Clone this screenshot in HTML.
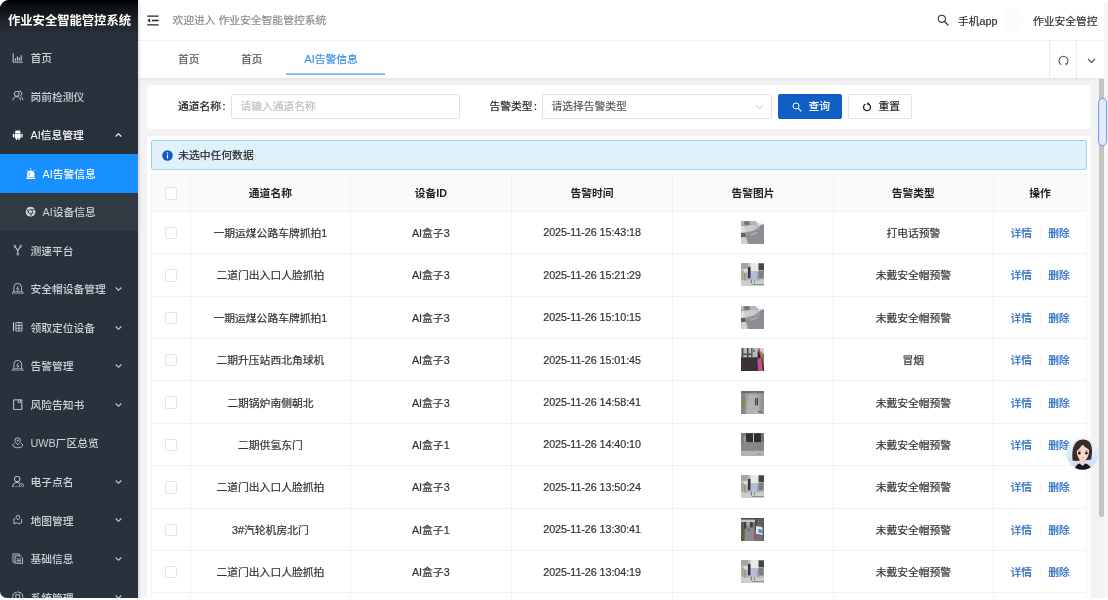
<!DOCTYPE html>
<html lang="zh-CN">
<head>
<meta charset="utf-8">
<title>作业安全智能管控系统</title>
<style>
*{box-sizing:border-box;margin:0;padding:0}
html,body{width:1108px;height:600px;overflow:hidden;background:#fff}
body{font-family:"Liberation Sans","Noto Sans CJK SC",sans-serif;font-size:10.77px;color:#333;position:relative;-webkit-text-stroke:0.2px}
.app{will-change:transform;position:absolute;left:0;top:0;width:1108px;height:598px;border-radius:9px 9px 7px 7px;overflow:hidden;background:#f3f3f4}
/* sidebar */
.side{position:absolute;left:0;top:0;width:138.3px;height:598px;background:#29323c;box-shadow:1px 0 3px rgba(0,21,41,.16)}
.logo{position:absolute;left:0;top:0;width:138.3px;height:38.5px;background:linear-gradient(#000 0%,#0a0c0f 12%,#1b2127 50%,#272f39 85%,#29323c 100%);color:#fff;font-weight:700;font-size:12.3px;line-height:42px;-webkit-text-stroke:0;padding-left:8px;white-space:nowrap;letter-spacing:0}
.mi{position:absolute;left:0;width:138.3px;height:38.5px;line-height:38.5px;font-weight:500;-webkit-text-stroke:0;color:#cdd1d5;white-space:nowrap}
.mi .t{position:absolute;left:30.5px;top:0.600px}
.mi svg.ic{position:absolute;left:12px;top:13.2px;width:11.5px;height:11.5px}
.mi svg.ar{position:absolute;left:115.3px;top:16.4px;width:7px;height:6px}
.mi.sub{background:#313943}
.mi.sub .t{left:42.5px}
.mi.sub svg.ic{left:24.6px}
.mi.act{background:#1890ff;color:#fff}
.mi.act svg.ic{top:13.7px}
.mi.open{color:#fff}
/* header */
.hd{position:absolute;left:138.3px;top:0;right:0;height:40.5px;background:#fff;border-bottom:1px solid #f0f0f0}
.hd .wel{position:absolute;left:34.2px;top:0;line-height:41px;color:#8c8c8c;white-space:nowrap}
.hd .r1{position:absolute;left:819.7px;top:0.6px;line-height:41px;color:#333;white-space:nowrap}
.hd .r2{position:absolute;left:894.7px;top:0.6px;line-height:41px;color:#333;white-space:nowrap}
/* tabs */
.tabs{position:absolute;left:138.3px;top:41px;right:0;height:37px;background:#fff;box-shadow:0 3px 4px -2px rgba(0,0,0,.085)}
.tabs .tb{position:absolute;top:0;line-height:36.5px;color:#555;white-space:nowrap}
.tabs .tb.on{color:#3a8ee6}
.tabs .ul{position:absolute;left:147.5px;top:32px;width:99px;height:2px;background:#8bbbf0}
.tabs .sep{position:absolute;top:0;width:1px;height:37px;background:#ebebeb}
/* content */
.card{position:absolute;background:#fff;border-radius:2px}
.lbl{position:absolute;line-height:24.6px;font-weight:400;color:#1a1a1a;white-space:nowrap}
.inp{position:absolute;height:24.6px;border:1px solid #e1e1e1;border-radius:2px;background:#fff;line-height:22.6px;padding-left:8.5px;white-space:nowrap}
.btn{position:absolute;height:24.6px;border-radius:2px;line-height:22.6px;white-space:nowrap;font-weight:500;-webkit-text-stroke:0}
.alert{position:absolute;left:151px;top:140px;width:936px;height:30px;background:#e1f1fb;border:1px solid #9fd0ec;border-radius:2px}
.alert .t{position:absolute;left:26.300px;top:0;line-height:28.600px;color:#262626;white-space:nowrap}
table{position:absolute;left:151px;top:174px;width:936px;border-collapse:separate;border-spacing:0;table-layout:fixed;border-top:1px solid #f2f2f2;border-left:1px solid #f2f2f2}
th,td{border-right:1px solid #f2f2f2;border-bottom:1px solid #f2f2f2;text-align:center;white-space:nowrap;padding:0;vertical-align:middle}
th{height:36.750px;background:#fafafa;font-weight:700;color:#1f1f1f;-webkit-text-stroke:0}
td{height:42.42px;color:#333;-webkit-text-stroke:0.2px}
.cb{display:inline-block;width:12.3px;height:12.3px;border:1px solid #e4e4e4;border-radius:2px;background:#fff;vertical-align:middle}
a{color:#1c63c2;text-decoration:none}
.tm{letter-spacing:-0.08px}
.dv{display:inline-block;width:1px;height:9px;background:#f2f2f2;margin:0 7.6px 0 7.6px;vertical-align:-1px}
.th{display:inline-block;width:23px;height:23px;vertical-align:middle;overflow:hidden}
</style>
</head>
<body>
<div class="app">

<!-- MAIN BACKGROUND -->
<div class="hd">
  <svg style="position:absolute;left:8.600px;top:15.400px" width="12" height="11" viewBox="0 0 12 11"><path d="M0.300 1.200H11.600M4.800 5.500H11.600M0.300 9.800H11.600" stroke="#222" stroke-width="1.300" fill="none"/><path d="M3.2 3.3V7.7L0.3 5.5Z" fill="#222"/></svg>
  <div class="wel">欢迎进入 作业安全智能管控系统</div>
  <svg style="position:absolute;left:798.5px;top:14.2px" width="12" height="12" viewBox="0 0 12 12"><circle cx="4.800" cy="4.800" r="3.600" stroke="#333" stroke-width="1.100" fill="none"/><path d="M7.500 7.500L11 11" stroke="#333" stroke-width="1.250" stroke-linecap="round"/></svg>
  <div class="r1">手机app</div>
  <div style="position:absolute;left:864px;top:8px;width:21px;height:24px;border-radius:8px;background:#fcfcfc"></div>
  <div class="r2">作业安全管控</div>
</div>

<div class="tabs">
  <div class="tb" style="left:39.7px">首页</div>
  <div class="tb" style="left:102.7px">首页</div>
  <div class="tb on" style="left:166.3px">AI告警信息</div>
  <div class="ul"></div>
  <div class="sep" style="left:910.3px"></div>
  <div class="sep" style="left:938.2px"></div>
  <svg style="position:absolute;left:919.5px;top:13.5px" width="11" height="11" viewBox="0 0 11 11"><path d="M3.2 9.6A4.5 4.5 0 1 1 7.8 9.6" stroke="#555" stroke-width="1.1" fill="none"/><path d="M7.2 8.2L8.4 10.4L9.6 8.6" fill="#555"/></svg>
  <svg style="position:absolute;left:949px;top:16.5px" width="9" height="6" viewBox="0 0 9 6"><path d="M1 1L4.5 4.5L8 1" stroke="#555" stroke-width="1.1" fill="none"/></svg>
</div>

<!-- filter card -->
<div class="card" style="left:147.3px;top:84.6px;width:943.7px;height:44.4px"></div>
<div class="lbl" style="left:178px;top:94px">通道名称<span style="margin-left:1.500px">:</span></div>
<div class="inp" style="left:231px;top:94px;width:228.7px;color:#bfbfbf">请输入通道名称</div>
<div class="lbl" style="left:489.5px;top:94px">告警类型<span style="margin-left:1.500px">:</span></div>
<div class="inp" style="left:542px;top:94px;width:229.500px;color:#595959">请选择告警类型</div>
<svg style="position:absolute;left:754.5px;top:103.5px" width="9" height="6" viewBox="0 0 9 6"><path d="M0.8 0.8L4.5 4.8L8.2 0.8" stroke="#c4c4c4" stroke-width="1" fill="none"/></svg>
<div class="btn" style="left:778px;top:94px;width:63.7px;background:#0f5fc4;color:#fff;border:1px solid #0f5fc4">
  <svg style="position:absolute;left:12.5px;top:6.5px" width="10" height="10" viewBox="0 0 10 10"><circle cx="4" cy="4" r="3" stroke="#fff" stroke-width="1" fill="none"/><path d="M6.300 6.300L9.100 9.100" stroke="#fff" stroke-width="1.100" stroke-linecap="round"/></svg>
  <span style="position:absolute;left:29.5px;top:0">查询</span>
</div>
<div class="btn" style="left:848px;top:94px;width:63.8px;background:#fff;color:#262626;border:1px solid #e2e2e2">
  <svg style="position:absolute;left:12.5px;top:6.5px" width="10" height="10" viewBox="0 0 10 10"><path d="M3.400 2.100A3.500 3.500 0 1 0 6.200 1.900" stroke="#262626" stroke-width="1.300" fill="none"/><path d="M6.800 0.100L4.400 1.900L7 3.500Z" fill="#262626"/></svg>
  <span style="position:absolute;left:29.5px;top:0">重置</span>
</div>

<!-- table card -->
<div class="card" style="left:147.3px;top:135.5px;width:943.7px;height:480px"></div>
<div class="alert">
  <svg style="position:absolute;left:9.700px;top:8.800px" width="11" height="11" viewBox="0 0 11 11"><circle cx="5.5" cy="5.5" r="5.3" fill="#0f5cbd"/><rect x="4.9" y="4.6" width="1.2" height="3.8" fill="#fff"/><circle cx="5.5" cy="3" r="0.8" fill="#fff"/></svg>
  <div class="t">未选中任何数据</div>
</div>

<table>
<colgroup><col style="width:39px"><col style="width:159.8px"><col style="width:161px"><col style="width:161.5px"><col style="width:160.3px"><col style="width:160.5px"><col></colgroup>
<tr><th><span class="cb"></span></th><th>通道名称</th><th>设备ID</th><th>告警时间</th><th>告警图片</th><th>告警类型</th><th>操作</th></tr>
<tr><td><span class="cb"></span></td><td>一期运煤公路车牌抓拍1</td><td>AI盒子3</td><td class="tm">2025-11-26 15:43:18</td><td><svg class="th" viewBox="0 0 23 23" width="23" height="23"><filter id="b0" x="-10%" y="-10%" width="120%" height="120%"><feGaussianBlur stdDeviation="0.5"/></filter><g filter="url(#b0)"><rect x="-2" y="-2" width="27" height="27" fill="#9c9da0"/><path d="M-2 -2H25V4L17 5.500L12 3L4 4.500L-2 3Z" fill="#b4b7ba"/><path d="M2.500 0.500L8 0L9 3.500L4 4.500Z" fill="#70757a"/><path d="M13.500 -2H25V2.800L19.500 3.400L16 2Z" fill="#f6f7f8"/><path d="M16.500 2.500L20.500 2.800L20 5.500L17 5Z" fill="#d9dcdf"/><path d="M2 5.500L12 3.500L17.500 5.500L13 9.500L4 11.500Z" fill="#c8ccd1"/><path d="M-2 5L3 5L4.500 11.500L-2 12.500Z" fill="#dcdee0"/><path d="M-2 12L4 11.800L5.200 16L-2 17Z" fill="#625f5d"/><path d="M-2 16.800L4.500 15.800L7.500 25H-2Z" fill="#d6cfc7"/><path d="M5.500 14L13 9.500L25 8V25H8.500Z" fill="#8d8e93"/><path d="M19 4.500L25 3.500V9L18.500 8Z" fill="#84898b"/><path d="M9 13L16 10.500L17 12.200L10 15Z" fill="#a9a7af"/></g></svg></td><td>打电话预警</td><td><a>详情</a><span class="dv"></span><a>删除</a></td></tr>
<tr><td><span class="cb"></span></td><td>二道门出入口人脸抓拍</td><td>AI盒子3</td><td class="tm">2025-11-26 15:21:29</td><td><svg class="th" viewBox="0 0 23 23" width="23" height="23"><filter id="b1" x="-10%" y="-10%" width="120%" height="120%"><feGaussianBlur stdDeviation="0.5"/></filter><g filter="url(#b1)"><rect x="-2" y="-2" width="27" height="27" fill="#bcbfc3"/><rect x="-2" y="-2" width="9" height="7.500" fill="#a5a59d"/><rect x="9.500" y="-2" width="8" height="10" fill="#e6e8ea"/><rect x="17.600" y="0.400" width="7" height="6.800" fill="#3d474d"/><rect x="17.600" y="8" width="5" height="7.500" fill="#7b7f81"/><rect x="0.400" y="8" width="2.200" height="8.500" fill="#b3a268"/><rect x="3" y="6.500" width="3.500" height="2" fill="#e3e6ea"/><rect x="7" y="3.800" width="2.500" height="11.800" rx="1" fill="#3a3051"/><rect x="11" y="10" width="5.200" height="7.200" fill="#b3bfd6"/><rect x="3.200" y="10" width="1.400" height="8" fill="#8a8e92"/><rect x="5.600" y="10.500" width="1" height="7.500" fill="#9a9ea2"/><rect x="16.600" y="9" width="1" height="9" fill="#8a8e92"/><rect x="-2" y="17.500" width="27" height="8" fill="#cdcdc9"/><rect x="9.800" y="16.500" width="1" height="4" fill="#7a6a6e"/><rect x="13" y="17" width="1" height="3.500" fill="#8a8e92"/><rect x="11" y="21" width="14" height="0.900" fill="#8a8e92"/></g></svg></td><td>未戴安全帽预警</td><td><a>详情</a><span class="dv"></span><a>删除</a></td></tr>
<tr><td><span class="cb"></span></td><td>一期运煤公路车牌抓拍1</td><td>AI盒子3</td><td class="tm">2025-11-26 15:10:15</td><td><svg class="th" viewBox="0 0 23 23" width="23" height="23"><filter id="b2" x="-10%" y="-10%" width="120%" height="120%"><feGaussianBlur stdDeviation="0.5"/></filter><g filter="url(#b2)"><rect x="-2" y="-2" width="27" height="27" fill="#9c9da0"/><path d="M-2 -2H25V4L17 5.500L12 3L4 4.500L-2 3Z" fill="#b4b7ba"/><path d="M2.500 0.500L8 0L9 3.500L4 4.500Z" fill="#70757a"/><path d="M13.500 -2H25V2.800L19.500 3.400L16 2Z" fill="#f6f7f8"/><path d="M16.500 2.500L20.500 2.800L20 5.500L17 5Z" fill="#d9dcdf"/><path d="M2 5.500L12 3.500L17.500 5.500L13 9.500L4 11.500Z" fill="#c8ccd1"/><path d="M-2 5L3 5L4.500 11.500L-2 12.500Z" fill="#dcdee0"/><path d="M-2 12L4 11.800L5.200 16L-2 17Z" fill="#625f5d"/><path d="M-2 16.800L4.500 15.800L7.500 25H-2Z" fill="#d6cfc7"/><path d="M5.500 14L13 9.500L25 8V25H8.500Z" fill="#8d8e93"/><path d="M19 4.500L25 3.500V9L18.500 8Z" fill="#84898b"/><path d="M9 13L16 10.500L17 12.200L10 15Z" fill="#a9a7af"/></g></svg></td><td>未戴安全帽预警</td><td><a>详情</a><span class="dv"></span><a>删除</a></td></tr>
<tr><td><span class="cb"></span></td><td>二期升压站西北角球机</td><td>AI盒子3</td><td class="tm">2025-11-26 15:01:45</td><td><svg class="th" viewBox="0 0 23 23" width="23" height="23"><filter id="b3" x="-10%" y="-10%" width="120%" height="120%"><feGaussianBlur stdDeviation="0.5"/></filter><g filter="url(#b3)"><rect x="-2" y="-2" width="27" height="12" fill="#b6babd"/><rect x="-2" y="9.300" width="27" height="16" fill="#3b3337"/><rect x="0.800" y="-2" width="1.600" height="12" fill="#4a4a4e"/><rect x="6" y="-2" width="1.600" height="12" fill="#4a4a4e"/><rect x="10.200" y="-2" width="1.300" height="12" fill="#505256"/><rect x="0.800" y="5.500" width="10" height="1.600" fill="#505256"/><path d="M12.300 0L14 4L12.500 4Z" fill="#4a5560"/><rect x="18.500" y="-2" width="6.500" height="8" fill="#d2d2d2"/><path d="M17.300 0.500L18.800 0.500L20.300 9L22 25H17.500L16.500 14Z" fill="#c94c97"/><path d="M17.300 2L19.800 9.500L17 10.500L16.500 6Z" fill="#3a1c28"/><path d="M19.300 3L25 9V19L22.800 18L20.800 10Z" fill="#7d7c34"/><path d="M22 5L25 6V11Z" fill="#aeb4b0"/></g></svg></td><td>冒烟</td><td><a>详情</a><span class="dv"></span><a>删除</a></td></tr>
<tr><td><span class="cb"></span></td><td>二期锅炉南侧朝北</td><td>AI盒子3</td><td class="tm">2025-11-26 14:58:41</td><td><svg class="th" viewBox="0 0 23 23" width="23" height="23"><filter id="b4" x="-10%" y="-10%" width="120%" height="120%"><feGaussianBlur stdDeviation="0.5"/></filter><g filter="url(#b4)"><rect x="-2" y="-2" width="27" height="27" fill="#a3a4a0"/><path d="M8.500 2.500H15.500L19.500 25H4.500Z" fill="#b1b3b1"/><rect x="-2" y="-2" width="6.500" height="27" fill="#89877a"/><rect x="0.800" y="9" width="3" height="5.500" fill="#8c8650"/><rect x="19.500" y="-2" width="6" height="27" fill="#94948e"/><rect x="-2" y="-2" width="27" height="4.300" fill="#6b6d69"/><rect x="10" y="1.500" width="6" height="1.800" fill="#8f9693"/><rect x="14.100" y="7" width="1.200" height="7.600" rx="0.500" fill="#5b3042"/><rect x="15.800" y="7" width="1.200" height="7.600" rx="0.500" fill="#5b3042"/><rect x="17" y="20" width="3.200" height="1.400" fill="#5f6367"/></g></svg></td><td>未戴安全帽预警</td><td><a>详情</a><span class="dv"></span><a>删除</a></td></tr>
<tr><td><span class="cb"></span></td><td>二期供氢东门</td><td>AI盒子1</td><td class="tm">2025-11-26 14:40:10</td><td><svg class="th" viewBox="0 0 23 23" width="23" height="23"><filter id="b5" x="-10%" y="-10%" width="120%" height="120%"><feGaussianBlur stdDeviation="0.5"/></filter><g filter="url(#b5)"><rect x="-2" y="-2" width="27" height="27" fill="#8b8d8d"/><rect x="-2" y="-2" width="6" height="12" fill="#7a7a7a"/><rect x="2.600" y="3" width="2" height="6.500" fill="#a39c9a"/><rect x="5" y="0.200" width="7" height="9" fill="#2f3139"/><rect x="13" y="0.200" width="7" height="9" fill="#2c2e36"/><rect x="5.300" y="5" width="2" height="4" fill="#4a3038"/><rect x="12.100" y="-2" width="0.800" height="11.500" fill="#c9cdd1"/><rect x="20.500" y="-2" width="4.500" height="12" fill="#6f7171"/><rect x="-2" y="9.500" width="27" height="8.500" fill="#868888"/><rect x="-2" y="17.800" width="27" height="8" fill="#b3b3b3"/><rect x="16" y="20.500" width="4" height="1" fill="#8a8a8a"/></g></svg></td><td>未戴安全帽预警</td><td><a>详情</a><span class="dv"></span><a>删除</a></td></tr>
<tr><td><span class="cb"></span></td><td>二道门出入口人脸抓拍</td><td>AI盒子3</td><td class="tm">2025-11-26 13:50:24</td><td><svg class="th" viewBox="0 0 23 23" width="23" height="23"><filter id="b6" x="-10%" y="-10%" width="120%" height="120%"><feGaussianBlur stdDeviation="0.5"/></filter><g filter="url(#b6)"><rect x="-2" y="-2" width="27" height="27" fill="#bcbfc3"/><rect x="-2" y="-2" width="9" height="7.500" fill="#a5a59d"/><rect x="9.500" y="-2" width="8" height="10" fill="#e6e8ea"/><rect x="17.600" y="0.400" width="7" height="6.800" fill="#3d474d"/><rect x="17.600" y="8" width="5" height="7.500" fill="#7b7f81"/><rect x="0.400" y="8" width="2.200" height="8.500" fill="#b3a268"/><rect x="3" y="6.500" width="3.500" height="2" fill="#e3e6ea"/><rect x="7" y="3.800" width="2.500" height="11.800" rx="1" fill="#3a3051"/><rect x="11" y="10" width="5.200" height="7.200" fill="#b3bfd6"/><rect x="3.200" y="10" width="1.400" height="8" fill="#8a8e92"/><rect x="5.600" y="10.500" width="1" height="7.500" fill="#9a9ea2"/><rect x="16.600" y="9" width="1" height="9" fill="#8a8e92"/><rect x="-2" y="17.500" width="27" height="8" fill="#cdcdc9"/><rect x="9.800" y="16.500" width="1" height="4" fill="#7a6a6e"/><rect x="13" y="17" width="1" height="3.500" fill="#8a8e92"/><rect x="11" y="21" width="14" height="0.900" fill="#8a8e92"/></g></svg></td><td>未戴安全帽预警</td><td><a>详情</a><span class="dv"></span><a>删除</a></td></tr>
<tr><td><span class="cb"></span></td><td>3#汽轮机房北门</td><td>AI盒子1</td><td class="tm">2025-11-26 13:30:41</td><td><svg class="th" viewBox="0 0 23 23" width="23" height="23"><filter id="b7" x="-10%" y="-10%" width="120%" height="120%"><feGaussianBlur stdDeviation="0.5"/></filter><g filter="url(#b7)"><rect x="-2" y="-2" width="27" height="27" fill="#70726e"/><rect x="-2" y="1.600" width="16" height="2.600" fill="#c3c7c7"/><rect x="-2" y="-2" width="27" height="3.300" fill="#4a4c4c"/><rect x="-2" y="4" width="5.500" height="21" fill="#5c6048"/><path d="M4.500 8H12.500L13.500 25H3.500Z" fill="#8a8c8e"/><rect x="3" y="4" width="2.200" height="6.500" fill="#3e4040"/><rect x="9" y="4" width="2.600" height="5.500" fill="#3e4040"/><rect x="5.500" y="4.200" width="3.300" height="3.600" fill="#a8acac"/><rect x="14" y="1.400" width="2.300" height="11" fill="#464a48"/><rect x="16.500" y="1.400" width="6" height="6.500" fill="#5e625a"/><path d="M15 8L22 9.500V17L15 15.500Z" fill="#e7e9f1"/><path d="M17.300 11L21.300 11.700V15.300L17.300 14.600Z" fill="#5a90cc"/><rect x="12.500" y="17" width="2.600" height="3.600" fill="#b0505a"/><rect x="7" y="10.500" width="1.300" height="2.600" fill="#4c5a8c"/><rect x="21.500" y="-2" width="3.500" height="27" fill="#5a5c58"/></g></svg></td><td>未戴安全帽预警</td><td><a>详情</a><span class="dv"></span><a>删除</a></td></tr>
<tr><td><span class="cb"></span></td><td>二道门出入口人脸抓拍</td><td>AI盒子3</td><td class="tm">2025-11-26 13:04:19</td><td><svg class="th" viewBox="0 0 23 23" width="23" height="23"><filter id="b8" x="-10%" y="-10%" width="120%" height="120%"><feGaussianBlur stdDeviation="0.5"/></filter><g filter="url(#b8)"><rect x="-2" y="-2" width="27" height="27" fill="#bcbfc3"/><rect x="-2" y="-2" width="9" height="7.500" fill="#a5a59d"/><rect x="9.500" y="-2" width="8" height="10" fill="#e6e8ea"/><rect x="17.600" y="0.400" width="7" height="6.800" fill="#3d474d"/><rect x="17.600" y="8" width="5" height="7.500" fill="#7b7f81"/><rect x="0.400" y="8" width="2.200" height="8.500" fill="#b3a268"/><rect x="3" y="6.500" width="3.500" height="2" fill="#e3e6ea"/><rect x="7" y="3.800" width="2.500" height="11.800" rx="1" fill="#3a3051"/><rect x="11" y="10" width="5.200" height="7.200" fill="#b3bfd6"/><rect x="3.200" y="10" width="1.400" height="8" fill="#8a8e92"/><rect x="5.600" y="10.500" width="1" height="7.500" fill="#9a9ea2"/><rect x="16.600" y="9" width="1" height="9" fill="#8a8e92"/><rect x="-2" y="17.500" width="27" height="8" fill="#cdcdc9"/><rect x="9.800" y="16.500" width="1" height="4" fill="#7a6a6e"/><rect x="13" y="17" width="1" height="3.500" fill="#8a8e92"/><rect x="11" y="21" width="14" height="0.900" fill="#8a8e92"/></g></svg></td><td>未戴安全帽预警</td><td><a>详情</a><span class="dv"></span><a>删除</a></td></tr>
<tr><td><span class="cb"></span></td><td>二道门出入口人脸抓拍</td><td>AI盒子3</td><td class="tm">2025-11-26 12:40:02</td><td><svg class="th" viewBox="0 0 23 23" width="23" height="23"><filter id="b9" x="-10%" y="-10%" width="120%" height="120%"><feGaussianBlur stdDeviation="0.5"/></filter><g filter="url(#b9)"><rect x="-2" y="-2" width="27" height="27" fill="#bcbfc3"/><rect x="-2" y="-2" width="9" height="7.500" fill="#a5a59d"/><rect x="9.500" y="-2" width="8" height="10" fill="#e6e8ea"/><rect x="17.600" y="0.400" width="7" height="6.800" fill="#3d474d"/><rect x="17.600" y="8" width="5" height="7.500" fill="#7b7f81"/><rect x="0.400" y="8" width="2.200" height="8.500" fill="#b3a268"/><rect x="3" y="6.500" width="3.500" height="2" fill="#e3e6ea"/><rect x="7" y="3.800" width="2.500" height="11.800" rx="1" fill="#3a3051"/><rect x="11" y="10" width="5.200" height="7.200" fill="#b3bfd6"/><rect x="3.200" y="10" width="1.400" height="8" fill="#8a8e92"/><rect x="5.600" y="10.500" width="1" height="7.500" fill="#9a9ea2"/><rect x="16.600" y="9" width="1" height="9" fill="#8a8e92"/><rect x="-2" y="17.500" width="27" height="8" fill="#cdcdc9"/><rect x="9.800" y="16.500" width="1" height="4" fill="#7a6a6e"/><rect x="13" y="17" width="1" height="3.500" fill="#8a8e92"/><rect x="11" y="21" width="14" height="0.900" fill="#8a8e92"/></g></svg></td><td>未戴安全帽预警</td><td><a>详情</a><span class="dv"></span><a>删除</a></td></tr>
</table>


<!-- scroll + floating -->
<div style="position:absolute;left:1091px;top:78.5px;width:17px;height:520px;background:#f3f3f3"></div>
<div style="position:absolute;left:1104.300px;top:0;width:4px;height:600px;background:#f7f7f7"></div>
<div style="position:absolute;left:1099px;top:79px;width:5.2px;height:438px;background:#c3c3c3;border-radius:0 0 2px 2px"></div>
<svg style="position:absolute;left:1096px;top:96px" width="12" height="52" viewBox="0 0 12 52"><path d="M5 2.400H8.500L10.600 5.500V46.500L8.500 49.600H5L2.600 46.500V5.500Z" fill="#e2ebfb" stroke="#5a8df0" stroke-width="0.9"/></svg>
<svg style="position:absolute;left:1066px;top:436.500px" width="33" height="33" viewBox="0 0 33 33">
  <defs><linearGradient id="avbg" x1="0" y1="0" x2="0" y2="1"><stop offset="0" stop-color="#f1f5fd"/><stop offset="1" stop-color="#c9dcfb"/></linearGradient>
  <clipPath id="avc"><circle cx="16.500" cy="16.500" r="16.200"/></clipPath>
  <filter id="avb" x="-10%" y="-10%" width="120%" height="120%"><feGaussianBlur stdDeviation="0.35"/></filter></defs>
  <circle cx="16.500" cy="16.500" r="16.200" fill="url(#avbg)"/>
  <g clip-path="url(#avc)" filter="url(#avb)">
    <path d="M6.600 23.500C5.800 16 6.500 8 11 4.500C14 1.800 20 1.600 23 4.500C26.500 8 26.600 15 25.200 22.500L22 23L10 24Z" fill="#3b2b28"/>
    <path d="M13.500 22H19.500V28H13.500Z" fill="#f0cfc6"/>
    <path d="M9 33C9 28.500 12 27 13.800 26.600L16.500 29L19.200 26.600C21 27 25 28.500 25 33Z" fill="#17171a"/>
    <path d="M10.800 14C10.800 9.500 13.500 8 16.800 8S23 9.500 23 14C23 19 20.500 23.600 16.800 23.600S10.800 19 10.800 14Z" fill="#f6dbd2"/>
    <path d="M9.600 15C9.800 9 12 6 15 5.500C19 5 23 7 23.800 13C21 11.500 18 9.500 16.500 7.500C15 10 12 13 9.600 15Z" fill="#3b2b28"/>
    <ellipse cx="13.400" cy="16.200" rx="1.250" ry="1.350" fill="#1d1513"/>
    <ellipse cx="20.400" cy="16.200" rx="1.250" ry="1.350" fill="#1d1513"/>
    <path d="M11.800 14.200Q13.300 13.300 14.800 14.100M19 14.100Q20.500 13.300 22 14.200" stroke="#4a3532" stroke-width="0.500" fill="none"/>
    <ellipse cx="16.900" cy="20.600" rx="1.300" ry="0.600" fill="#e59a98"/>
  </g>
</svg>

<!-- SIDEBAR -->
<div class="side">
  <div class="logo">作业安全智能管控系统</div>
  <div class="mi " style="top:38.40px"><svg class="ic" viewBox="0 0 12 12"><path d="M1.2 1.3V10.6H11.3" stroke="currentColor" stroke-width="1" fill="none"/><path d="M3.6 9V6.8M5.6 9V4.6M7.6 9V5.8M9.6 9V3.4" stroke="currentColor" stroke-width="1.1" fill="none"/></svg><span class="t">首页</span></div>
  <div class="mi " style="top:76.95px"><svg class="ic" viewBox="0 0 12 12"><circle cx="4.9" cy="4" r="2.5" stroke="currentColor" stroke-width="1" fill="none"/><path d="M0.9 10.8C1.1 8.4 2.8 6.9 4.9 6.9S8.7 8.4 8.9 10.8" stroke="currentColor" stroke-width="1" fill="none"/><path d="M6.6 1.6A2.4 2.4 0 1 1 8.6 5.9M8.9 6.9C10.3 7.4 11.2 8.8 11.3 10.3" stroke="currentColor" stroke-width="1" fill="none"/></svg><span class="t">岗前检测仪</span></div>
  <div class="mi open" style="top:115.50px"><svg class="ic" viewBox="0 0 12 12"><path d="M2.9 4.6A3.1 3.1 0 0 1 9.1 4.6Z" fill="currentColor"/><rect x="2.9" y="5.1" width="6.2" height="4.6" rx="0.6" fill="currentColor"/><rect x="0.9" y="5" width="1.4" height="3.8" rx="0.7" fill="currentColor"/><rect x="9.7" y="5" width="1.4" height="3.8" rx="0.7" fill="currentColor"/><rect x="4" y="9" width="1.4" height="2.7" rx="0.7" fill="currentColor"/><rect x="6.6" y="9" width="1.4" height="2.7" rx="0.7" fill="currentColor"/><path d="M3.7 0.8L4.5 2.2M8.3 0.8L7.5 2.2" stroke="currentColor" stroke-width="0.6"/></svg><span class="t">AI信息管理</span><svg class="ar" viewBox="0 0 7 6"><path d="M0.700 4.500L3.500 1.700L6.300 4.500" stroke="currentColor" stroke-width="1.100" fill="none"/></svg></div>
  <div class="mi sub act" style="top:154.05px"><svg class="ic" viewBox="0 0 12 12"><path d="M2.200 9.400V6.300A3.800 3.800 0 0 1 9.800 6.300V9.400Z" fill="currentColor"/><rect x="1.3" y="9.9" width="9.4" height="1.5" rx="0.3" fill="currentColor"/><path d="M6 0.4V1.7M1.7 1.9L2.7 2.9M10.3 1.9L9.3 2.9" stroke="currentColor" stroke-width="1" fill="none"/><path d="M4.3 8.6V6.3A1.7 1.7 0 0 1 5.6 4.7" stroke="#1890ff" stroke-width="0.7" fill="none"/></svg><span class="t">AI告警信息</span></div>
  <div class="mi sub" style="top:192.60px"><svg class="ic" viewBox="0 0 12 12"><circle cx="5.800" cy="6" r="5.100" fill="currentColor"/><circle cx="5.800" cy="6" r="2.200" fill="none" stroke="#313943" stroke-width="0.9"/><path d="M5.800 3.800H10.400M3.900 7.100L1.600 3.100M7.700 7.200L5.400 11" stroke="#313943" stroke-width="0.9" fill="none"/></svg><span class="t">AI设备信息</span></div>
  <div class="mi " style="top:231.15px"><svg class="ic" viewBox="0 0 12 12"><path d="M6 10V6.800L3.200 2.800M6 6.800L8.800 2.800" stroke="currentColor" stroke-width="1.1" fill="none"/><circle cx="2.900" cy="2.300" r="1" fill="none" stroke="currentColor" stroke-width="0.8"/><circle cx="9.100" cy="2.300" r="1" fill="none" stroke="currentColor" stroke-width="0.8"/><circle cx="6" cy="10.700" r="1" fill="none" stroke="currentColor" stroke-width="0.8"/></svg><span class="t">测速平台</span></div>
  <div class="mi " style="top:269.70px"><svg class="ic" viewBox="0 0 12 12"><path d="M2 9.300V4.400A4 4 0 0 1 10 4.400V9.300" stroke="currentColor" stroke-width="0.9" fill="none"/><rect x="0.500" y="9.300" width="11" height="2.200" rx="0.900" stroke="currentColor" stroke-width="0.9" fill="none"/><path d="M6.700 3.300L4.800 6.200H7.200L5.300 8.800" stroke="currentColor" stroke-width="0.8" fill="none"/></svg><span class="t">安全帽设备管理</span><svg class="ar" viewBox="0 0 7 6"><path d="M0.700 1.500L3.500 4.300L6.300 1.500" stroke="currentColor" stroke-width="1.100" fill="none"/></svg></div>
  <div class="mi " style="top:308.25px"><svg class="ic" viewBox="0 0 12 12"><path d="M1.6 1.4V10.6" stroke="currentColor" stroke-width="1.2" fill="none"/><path d="M4 1.6H10.4V10.4H4ZM7.2 1.6V10.4M4 4.6H10.4M4 7.5H10.4" stroke="currentColor" stroke-width="0.9" fill="none"/></svg><span class="t">领取定位设备</span><svg class="ar" viewBox="0 0 7 6"><path d="M0.700 1.500L3.500 4.300L6.300 1.500" stroke="currentColor" stroke-width="1.100" fill="none"/></svg></div>
  <div class="mi " style="top:346.80px"><svg class="ic" viewBox="0 0 12 12"><path d="M2 9.300V4.400A4 4 0 0 1 10 4.400V9.300" stroke="currentColor" stroke-width="0.9" fill="none"/><rect x="0.500" y="9.300" width="11" height="2.200" rx="0.900" stroke="currentColor" stroke-width="0.9" fill="none"/><path d="M6.700 3.300L4.800 6.200H7.200L5.300 8.800" stroke="currentColor" stroke-width="0.8" fill="none"/></svg><span class="t">告警管理</span><svg class="ar" viewBox="0 0 7 6"><path d="M0.700 1.500L3.500 4.300L6.300 1.500" stroke="currentColor" stroke-width="1.100" fill="none"/></svg></div>
  <div class="mi " style="top:385.35px"><svg class="ic" viewBox="0 0 12 12"><path d="M1.7 0.9H10.3V11.1H1.7Z" stroke="currentColor" stroke-width="1" fill="none"/><path d="M6.6 0.9V3.8H8.8V0.9" stroke="currentColor" stroke-width="0.9" fill="none"/></svg><span class="t">风险告知书</span><svg class="ar" viewBox="0 0 7 6"><path d="M0.700 1.500L3.500 4.300L6.300 1.500" stroke="currentColor" stroke-width="1.100" fill="none"/></svg></div>
  <div class="mi " style="top:423.90px"><svg class="ic" viewBox="0 0 12 12"><path d="M6 8.2C4.3 6.4 3.2 5 3.2 3.6A2.8 2.8 0 0 1 8.8 3.6C8.800 5 7.700 6.400 6 8.200Z" stroke="currentColor" stroke-width="0.9" fill="none"/><circle cx="6" cy="3.6" r="0.9" fill="currentColor"/><path d="M2.600 6.600C0.800 7.300 0.400 8.600 1.200 9.600S4.200 11.200 6 11.200S10 10.600 10.800 9.600S11.200 7.300 9.400 6.600" stroke="currentColor" stroke-width="0.9" fill="none"/></svg><span class="t">UWB厂区总览</span></div>
  <div class="mi " style="top:462.45px"><svg class="ic" viewBox="0 0 12 12"><circle cx="5.400" cy="3.100" r="2.900" stroke="currentColor" stroke-width="1" fill="none"/><path d="M0.500 11.600C0.600 8.800 2.300 6.700 5.400 6.700C6.700 6.700 7.600 7 8.300 7.500" stroke="currentColor" stroke-width="1" fill="none"/><path d="M0.500 11.600H6.800" stroke="currentColor" stroke-width="1"/><circle cx="9.800" cy="10" r="2.100" stroke="currentColor" stroke-width="0.8" fill="none"/><path d="M8.600 11.100L11 8.900" stroke="currentColor" stroke-width="0.7"/></svg><span class="t">电子点名</span><svg class="ar" viewBox="0 0 7 6"><path d="M0.700 1.500L3.500 4.300L6.300 1.500" stroke="currentColor" stroke-width="1.100" fill="none"/></svg></div>
  <div class="mi " style="top:501.00px"><svg class="ic" viewBox="0 0 12 12"><path d="M6.200 6.300C5 5 4.400 4.200 4.400 3.300A1.800 1.800 0 0 1 8 3.300C8 4.200 7.400 5 6.200 6.300Z" stroke="currentColor" stroke-width="0.9" fill="none"/><path d="M3.600 4.600L2 5.200V10.200L4.600 9.200L7.400 10.200L10 9.200V5.200" stroke="currentColor" stroke-width="0.9" fill="none"/></svg><span class="t">地图管理</span><svg class="ar" viewBox="0 0 7 6"><path d="M0.700 1.500L3.500 4.300L6.300 1.500" stroke="currentColor" stroke-width="1.100" fill="none"/></svg></div>
  <div class="mi " style="top:539.55px"><svg class="ic" viewBox="0 0 12 12"><path d="M1 1H7.600V3" stroke="currentColor" stroke-width="0.9" fill="none"/><path d="M1 1V9.400H3" stroke="currentColor" stroke-width="0.9" fill="none"/><path d="M3.200 3H8.800L11 5.100V11.200H3.200Z" stroke="currentColor" stroke-width="0.9" fill="none"/><path d="M4.800 6.200H9.400M4.800 7.800H9.400M4.800 9.400H9.400" stroke="currentColor" stroke-width="0.8" fill="none"/></svg><span class="t">基础信息</span><svg class="ar" viewBox="0 0 7 6"><path d="M0.700 1.500L3.500 4.300L6.300 1.500" stroke="currentColor" stroke-width="1.100" fill="none"/></svg></div>
  <div class="mi " style="top:578.10px"><svg class="ic" viewBox="0 0 12 12"><path d="M6 0.600L7.300 1.700L9 1.500L9.700 3L11.200 3.800L10.900 5.500L11.700 7L10.500 8.200L10.400 9.900L8.700 10.300L7.600 11.600H4.400L3.300 10.300L1.600 9.900L1.500 8.200L0.300 7L1.100 5.500L0.800 3.800L2.300 3L3 1.500L4.700 1.700Z" stroke="currentColor" stroke-width="0.9" fill="none"/><rect x="4" y="4" width="4" height="4" stroke="currentColor" stroke-width="0.9" fill="none"/></svg><span class="t">系统管理</span><svg class="ar" viewBox="0 0 7 6"><path d="M0.700 1.500L3.500 4.300L6.300 1.500" stroke="currentColor" stroke-width="1.100" fill="none"/></svg></div>
</div>

</div>
</body>
</html>
